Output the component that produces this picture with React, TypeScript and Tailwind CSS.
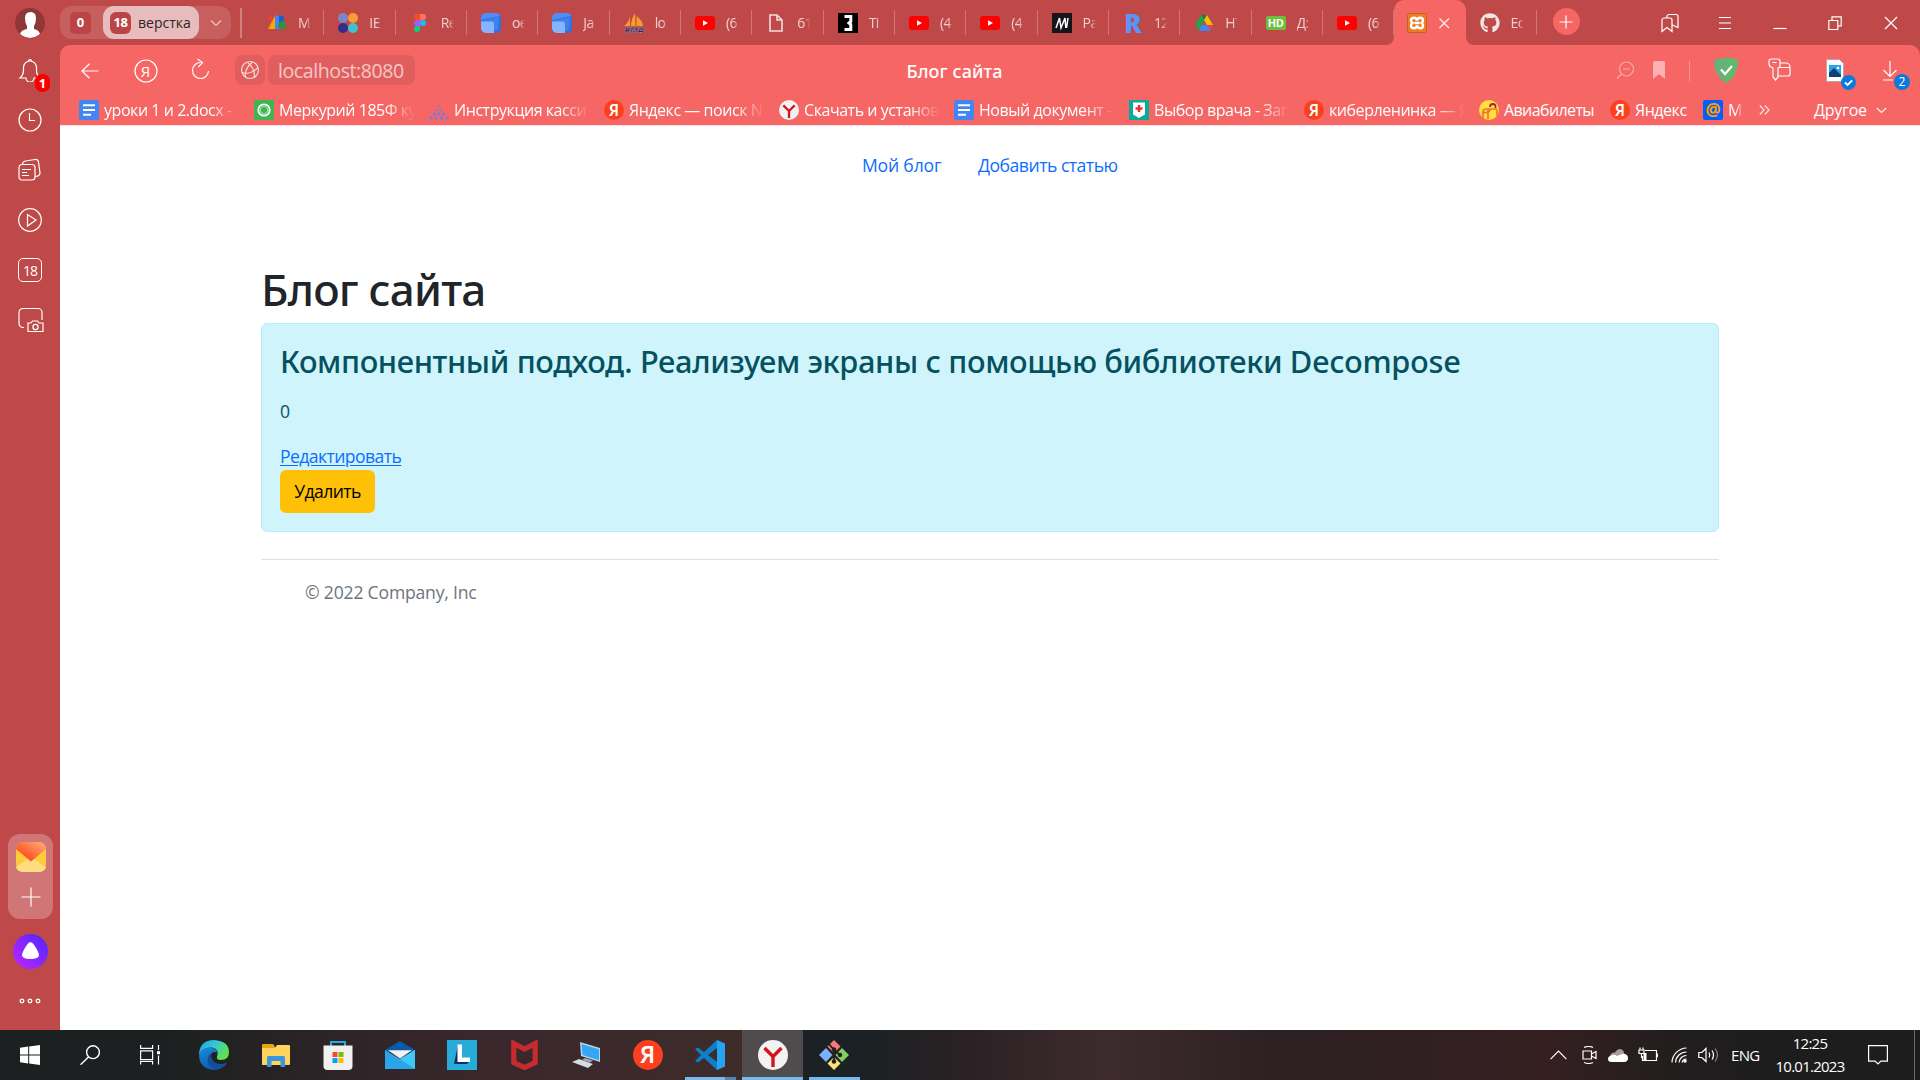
import type { ReactNode } from "react";
import { FaGithub } from "react-icons/fa";

const stroke = { fill: "none", stroke: "currentColor", strokeWidth: 1.2 } as const;

function YouTubeIcon() {
  return (
    <svg className="size-5" viewBox="0 0 20 20">
      <rect y="3" width="20" height="14" rx="3" fill="#ff0000" />
      <path d="M8 7.2v5.6l5-2.8z" fill="#fff" />
    </svg>
  );
}

function BlueDocIcon() {
  return (
    <svg className="size-5" viewBox="0 0 20 20">
      <rect width="20" height="20" rx="5" fill="#2f6fe4" />
      <path d="M0 7V5a5 5 0 0 1 5-5h10a5 5 0 0 1 4.500 3z" fill="#4f8df0" />
      <path d="M0 8l17-3.500q1.500 0 1.300 1.500L17 17l-4 1z" fill="#3f82ee" />
      <path d="M0 8.500h10.500q2.500 0 2.500 2.500v9H5a5 5 0 0 1-5-5z" fill="#86b4ff" />
    </svg>
  );
}

function YaIcon({ className }: { className: string }) {
  return (
    <svg className={className} viewBox="0 0 20 20">
      <circle cx="10" cy="10" r="10" fill="#fc3f1d" />
      <text x="9.600" y="15.600" textAnchor="middle" fill="#fff" fontSize="15.500" fontWeight="600" fontFamily="Noto Sans, sans-serif">
        Я
      </text>
    </svg>
  );
}

function YBrowserIcon({ className }: { className: string }) {
  return (
    <svg className={className} viewBox="0 0 30 30">
      <circle cx="15" cy="15" r="15" fill="#f2f2f2" />
      <path d="M6.500 8l8.500 8.500L23.500 8M15 16v11" fill="none" stroke="#d3151b" strokeWidth="3.400" />
    </svg>
  );
}

function DocsIcon() {
  return (
    <svg className="size-5 shrink-0" viewBox="0 0 20 20">
      <rect width="20" height="20" rx="2" fill="#4285f4" />
      <path d="M4 5.200h12M4 10h12M4 14.800h8" stroke="#fff" strokeWidth="2" />
    </svg>
  );
}

const adsIcon = (
  <svg className="size-5" viewBox="0 0 20 20">
    <path d="M8 3L1 16h8z" fill="#f9ab00" />
    <path d="M8 3L3 16H1z" fill="#f29900" />
    <rect x="8" y="2.500" width="6" height="13.500" fill="#4285f4" />
    <path d="M12 2.500h1.500a3.500 3.500 0 0 1 0 7H12z" fill="#1a5fd0" />
    <circle cx="15" cy="12.200" r="4" fill="#2b9348" />
    <circle cx="3.500" cy="5" r="2.500" fill="#ea4335" />
  </svg>
);

const dotsIcon = (
  <svg className="size-5" viewBox="0 0 20 20">
    <circle cx="5" cy="5" r="5" fill="#7c86c6" />
    <circle cx="15" cy="5" r="5" fill="#f99d33" />
    <circle cx="5" cy="15" r="5" fill="#322c8e" />
    <circle cx="15" cy="15" r="5" fill="#3fc1d0" />
  </svg>
);

const figmaIcon = (
  <svg className="size-5" viewBox="0 0 20 20">
    <path d="M10 1H7a3 3 0 0 0 0 6h3z" fill="#f24e1e" />
    <path d="M10 1h3a3 3 0 0 1 0 6h-3z" fill="#ff7262" />
    <path d="M10 7H7a3 3 0 0 0 0 6h3z" fill="#a259ff" />
    <circle cx="13" cy="10" r="3" fill="#1abcfe" />
    <path d="M10 13H7a3 3 0 1 0 3 3z" fill="#0acf83" />
  </svg>
);

const pmaIcon = (
  <svg className="size-5" viewBox="0 0 20 20">
    <path d="M6 3v10H0q5-3.500 6-10zM11 0Q7 6.500 7 13h4.500zM12.500 3q6 4.500 6.500 10h-6.500z" fill="#f89c2b" />
    <text x="10" y="19.800" textAnchor="middle" fill="#26285c" stroke="#c9b4c4" strokeWidth="0.300" fontSize="8.500" fontWeight="800" fontStyle="italic" fontFamily="Open Sans, sans-serif">
      PMA
    </text>
  </svg>
);

const fileIcon = (
  <svg className="size-5 text-[#f3dede]" viewBox="0 0 20 20">
    <path d="M4 2h7l5 5v11H4zM11 2v5h5" fill="none" stroke="currentColor" strokeWidth="1.600" />
  </svg>
);

const threeIcon = (
  <svg className="size-5" viewBox="0 0 20 20">
    <rect width="20" height="20" fill="#000" />
    <path d="M6.500 3.500h6.300v5L11 10l1.800 1.500v5H6.500" fill="none" stroke="#fff" strokeWidth="3" />
  </svg>
);

const mIcon = (
  <svg className="size-5" viewBox="0 0 20 20">
    <rect width="20" height="20" fill="#14141a" />
    <path d="M4 15L7.500 5l1.500 10L13 5l.8 10M14.500 15L16 5" fill="none" stroke="#fff" strokeWidth="1.500" />
  </svg>
);

const rIcon = (
  <div className="flex size-5 items-center justify-center font-['Open_Sans'] text-[26px] leading-5 font-extrabold text-[#5b94f5]">R</div>
);

const driveIcon = (
  <svg className="size-5" viewBox="0 0 20 20">
    <path d="M7 2l3.500 5L5 17l-4-5z" fill="#26a04b" />
    <path d="M7 2h6l6 10h-6z" fill="#fbbc04" />
    <path d="M7 2h6l-3 5z" fill="#188038" />
    <path d="M7.500 12H19l-3.500 6H5z" fill="#4285f4" />
    <path d="M13 12h6l-3 5z" fill="#ea4335" />
  </svg>
);

const hdIcon = (
  <div className="flex h-[14px] w-5 items-center justify-center rounded-[2px] bg-[#6cbf3b] font-['Open_Sans'] text-[11px] leading-none font-bold tracking-[-0.5px] text-white">HD</div>
);

const xamppIcon = (
  <svg className="size-5" viewBox="0 0 20 20">
    <rect x="0.500" y="0.500" width="19" height="19" rx="2" fill="#f07c22" stroke="#b9642a" />
    <path
      d="M10 7.500Q9.500 4.800 7 4.800 4 4.800 4 7.500 4 9 5.500 10 4 11 4 12.500 4 15.200 7 15.200q2.500 0 3-2.700.5 2.700 3 2.700 3 0 3-2.700 0-1.500-1.500-2.500Q16 9 16 7.500 16 4.800 13 4.800q-2.500 0-3 2.700zM7.500 10h5"
      fill="none"
      stroke="#fff"
      strokeWidth="2.400"
    />
  </svg>
);

const tabs: { icon: ReactNode; label: string }[] = [
  { icon: adsIcon, label: "М" },
  { icon: dotsIcon, label: "IE" },
  { icon: figmaIcon, label: "Re" },
  { icon: <BlueDocIcon />, label: "ое" },
  { icon: <BlueDocIcon />, label: "Ja" },
  { icon: pmaIcon, label: "lo" },
  { icon: <YouTubeIcon />, label: "(6" },
  { icon: fileIcon, label: "61" },
  { icon: threeIcon, label: "Ti" },
  { icon: <YouTubeIcon />, label: "(4" },
  { icon: <YouTubeIcon />, label: "(4" },
  { icon: mIcon, label: "Ра" },
  { icon: rIcon, label: "12" },
  { icon: driveIcon, label: "НТ" },
  { icon: hdIcon, label: "Д:" },
  { icon: <YouTubeIcon />, label: "(6" },
];

function Tab({ icon, label }: { icon: ReactNode; label: string }) {
  return (
    <div className="flex h-[45px] w-[71.33px] shrink-0 items-center pl-[14px]">
      <div className="flex size-5 shrink-0 items-center justify-center">{icon}</div>
      <div className="ml-[11px] w-[13px] shrink-0 overflow-hidden mask-r-from-60% mask-r-to-100% text-[14px] leading-5 tracking-[-0.6px] whitespace-nowrap text-white/75">{label}</div>
      <div className="ml-auto h-[25px] w-px bg-white/25" />
    </div>
  );
}

function TabStrip() {
  return (
    <div className="flex h-[45px] items-center">
      <div className="flex h-[33px] w-[171px] items-center rounded-xl bg-white/12 pl-[10px]">
        <div className="flex h-[22px] w-[21px] items-center justify-center rounded-[5px] bg-[#bd4446] text-[13px] font-bold text-white">0</div>
        <div className="ml-3 flex h-[33px] w-24 items-center rounded-[11px] bg-[#e7bcbd] pl-[7px]">
          <div className="flex h-[22px] w-[21px] items-center justify-center rounded-[6px] bg-[#bd4446] text-[13px] font-bold tracking-[-0.5px] text-white">18</div>
          <span className="ml-[7px] text-[14px] text-[#2d2424]">верстка</span>
        </div>
        <svg className="ml-[11px] h-3 w-3 text-white/65" viewBox="0 0 12 12">
          <path d="M1 3.500l5 5 5-5" {...stroke} />
        </svg>
      </div>
      <div className="ml-[9px] h-[30px] w-[2px] bg-white/30" />
      <div className="ml-[11px] flex">
        {tabs.map((t, i) => (
          <Tab key={i} icon={t.icon} label={t.label} />
        ))}
        <div className="relative flex h-[45px] w-[71.33px] items-center rounded-t-[10px] bg-[#f56665] pl-[13px]">
          <svg className="absolute bottom-0 -left-2 size-2 text-[#f56665]" viewBox="0 0 8 8">
            <path d="M8 0v8H0a8 8 0 0 0 8-8z" fill="currentColor" />
          </svg>
          <svg className="absolute -right-2 bottom-0 size-2 text-[#f56665]" viewBox="0 0 8 8">
            <path d="M0 0v8h8a8 8 0 0 1-8-8z" fill="currentColor" />
          </svg>
          {xamppIcon}
          <svg className="ml-[10px] size-[14px] text-white/90" viewBox="0 0 14 14">
            <path d="M2.500 2.500l9.500 9.500M12 2.500L2.500 12" {...stroke} />
          </svg>
        </div>
        <Tab icon={<FaGithub className="size-5 text-[#f1e4e4]" />} label="Ес" />
      </div>
      <div className="mb-[2px] ml-4 flex size-[27px] items-center justify-center rounded-full bg-[#f56665] text-white">
        <svg className="size-[14px]" viewBox="0 0 14 14">
          <path d="M7 .5v13M.5 7h13" {...stroke} />
        </svg>
      </div>
      <div className="ml-auto flex items-center text-white">
        <div className="flex w-[55px] justify-center">
          <svg className="size-5" viewBox="0 0 20 20">
            <path d="M2 7a2 2 0 0 1 2-2h6a2 2 0 0 1 2 2v11.500l-5-4-5 4zM7 5V3.500a2 2 0 0 1 2-2h7a2 2 0 0 1 2 2V14.500L12.500 12" {...stroke} />
          </svg>
        </div>
        <div className="flex w-[55px] justify-center">
          <svg className="size-[14px]" viewBox="0 0 14 14">
            <path d="M1 1.500h12M1 7h12M1 12.500h12" {...stroke} />
          </svg>
        </div>
        <div className="flex w-[55px] justify-center">
          <svg className="size-[14px]" viewBox="0 0 14 14">
            <path d="M.5 12.500h13" {...stroke} />
          </svg>
        </div>
        <div className="flex w-[55px] justify-center">
          <svg className="size-[14px]" viewBox="0 0 14 14">
            <path d="M.8 4.500h9v9h-9zM4 4.500V.8h9.200v9H9.800" {...stroke} />
          </svg>
        </div>
        <div className="flex w-[58px] justify-center">
          <svg className="size-[14px]" viewBox="0 0 14 14">
            <path d="M1 1l12 12M13 1L1 13" {...stroke} />
          </svg>
        </div>
      </div>
    </div>
  );
}

function AddressRow() {
  return (
    <div className="flex h-[52px] items-center text-white">
      <div className="flex w-[59px] justify-center">
        <svg className="-mt-px h-4 w-[18px]" viewBox="0 0 18 16">
          <path d="M17.500 8H1M8.500.8L1 8l7.500 7.200" {...stroke} />
        </svg>
      </div>
      <div className="flex w-[53px] justify-center">
        <svg className="-mt-px size-6" viewBox="0 0 24 24">
          <circle cx="12" cy="12" r="11" {...stroke} />
          <text x="11.500" y="17.500" textAnchor="middle" fill="currentColor" fontSize="15" fontFamily="Open Sans, sans-serif">
            Я
          </text>
        </svg>
      </div>
      <div className="flex w-14 justify-center">
        <svg className="-mt-1 size-[22px]" viewBox="0 0 22 22">
          <path d="M11.500 4.500a8 8 0 1 0 8 8.500M8.500 1l5 3.600-4.200 4.400" {...stroke} />
        </svg>
      </div>
      <div className="ml-[7px] -mt-[2px] flex size-[30px] items-center justify-center rounded-lg bg-[#e05e5d] text-white/75">
        <svg className="size-5" viewBox="0 0 20 20">
          <g {...stroke}>
            <circle cx="10" cy="10" r="8.500" />
            <path d="M12.500 2Q4 9 5.500 17M7.500 2.500Q15 8 14.500 17.500M2 12.500q8 3 16-5" />
          </g>
        </svg>
      </div>
      <div className="ml-[3px] -mt-[2px] flex h-[30px] w-[147px] items-center rounded-lg bg-[#e05e5d] pt-px pl-[10px] text-[19.5px] tracking-[-0.4px] text-white/65">localhost:8080</div>
      <div className="flex flex-1 justify-center pr-[115px] font-['Noto_Sans'] text-[18px] font-medium tracking-[0.1px]">Блог сайта</div>
      <div className="flex w-8 justify-center text-white/45">
        <svg className="-mt-[2px] size-[18px]" viewBox="0 0 18 18">
          <path d="M10.500 1a7 7 0 1 1 0 14 7 7 0 0 1 0-14zM5.500 13L1 17.500M7 8h7" {...stroke} />
        </svg>
      </div>
      <div className="flex w-9 justify-center text-white/50">
        <svg className="-mt-[2px] h-[18px] w-3" viewBox="0 0 12 18">
          <path d="M0 1.500Q0 0 1.500 0h9Q12 0 12 1.500V18l-6-5-6 5z" fill="currentColor" />
        </svg>
      </div>
      <div className="flex w-[25px] justify-center">
        <div className="h-5 w-px bg-white/30" />
      </div>
      <div className="flex w-12 justify-center">
        <svg className="-mt-[2px] h-[25px] w-6" viewBox="0 0 24 25">
          <path d="M0 2q7-2.500 12-2v25Q0 18 0 2z" fill="#67b279" />
          <path d="M24 2q-7-2.500-12-2v25Q24 18 24 2z" fill="#5fba6b" />
          <path d="M7 11.500l4 4.500 7-8" fill="none" stroke="#fff" strokeWidth="2.200" />
        </svg>
      </div>
      <div className="flex w-[60px] justify-center">
        <svg className="-mt-[2px] size-6" viewBox="0 0 24 24">
          <path d="M3 1h7a2 2 0 0 1 2 2v5a3 3 0 0 1-2 2v9l-2.500 3L5 19v-9L2 8.500Q1 7 1 5.500V3a2 2 0 0 1 2-2zM4.500 4.500h4M12 5h6a4 4 0 0 1 4 4v7a2 2 0 0 1-2 2h-9.500M12 9.500h10" {...stroke} />
        </svg>
      </div>
      <div className="flex w-[50px] justify-center">
        <div className="relative -mt-[2px] h-[23px] w-[18px]">
          <svg className="h-[23px] w-[18px]" viewBox="0 0 18 23">
            <path d="M.5.500h13l4 4v18H.5z" fill="#fff" stroke="#b9a5a5" />
            <rect x="3" y="6" width="12" height="12" fill="#29a3e8" />
            <path d="M3 18v-4l5-5 7 7v2z" fill="#123f73" />
            <circle cx="12" cy="9" r="1.300" fill="#fff" />
          </svg>
          <svg className="absolute -right-3 -bottom-2 size-[15px]" viewBox="0 0 15 15">
            <circle cx="7.500" cy="7.500" r="7.500" fill="#0b7bdb" />
            <path d="M4 7.500l2.500 2.500 4.700-4.700" fill="none" stroke="#fff" strokeWidth="1.800" />
          </svg>
        </div>
      </div>
      <div className="flex w-[60px] justify-center">
        <div className="relative size-5">
          <svg className="size-5" viewBox="0 0 20 20">
            <path d="M10 0v15M3.500 9l6.500 6.500L16.500 9M3 19h10" {...stroke} />
          </svg>
          <div className="absolute -right-[10px] -bottom-[9px] flex size-4 items-center justify-center rounded-full bg-[#0b7bdb] text-[12px] leading-none text-white">2</div>
        </div>
      </div>
    </div>
  );
}

const greenIcon = (
  <svg className="size-5 shrink-0" viewBox="0 0 20 20">
    <rect width="20" height="20" fill="#3fb44f" />
    <circle cx="10" cy="10" r="5.700" fill="none" stroke="#fff" strokeWidth="1.800" />
    <circle cx="10" cy="10" r="3.600" fill="none" stroke="#9bd8a3" strokeWidth="1.200" />
  </svg>
);

const pyramidIcon = (
  <svg className="size-5 shrink-0" viewBox="0 0 20 20" fill="#6d7ce8">
    <circle cx="10" cy="6" r="1.200" opacity="0.500" />
    <circle cx="8" cy="10" r="1.400" opacity="0.700" />
    <circle cx="12" cy="10" r="1.400" opacity="0.700" />
    <circle cx="5.500" cy="14" r="1.500" />
    <circle cx="10" cy="14" r="1.500" />
    <circle cx="14.500" cy="14" r="1.500" />
    <circle cx="2" cy="18" r="1.600" />
    <circle cx="7" cy="18" r="1.600" />
    <circle cx="12.500" cy="18" r="1.600" />
    <circle cx="18" cy="18" r="1.600" />
  </svg>
);

const doctorIcon = (
  <svg className="size-5 shrink-0" viewBox="0 0 20 20">
    <rect width="20" height="20" fill="#0bab9b" />
    <path d="M4 2.500h12v12L10 18l-6-3.500z" fill="#fff" />
    <path d="M10 5v7M6.500 8.500h7" stroke="#ee2c39" strokeWidth="2.400" />
  </svg>
);

const aviaIcon = (
  <svg className="size-5 shrink-0" viewBox="0 0 20 20">
    <circle cx="10" cy="10" r="10" fill="#ffdf3f" />
    <path d="M4 19V12q0-3 3-3h9q2 0 2 2v5M9 9v10M3 12q6 2 8-2" fill="none" stroke="#f0782a" strokeWidth="1.700" />
    <path d="M11 7q0-3 3-3t2.500 4" fill="none" stroke="#b01c3c" strokeWidth="1.800" />
  </svg>
);

const mailRuIcon = (
  <div className="flex size-5 shrink-0 items-center justify-center rounded-[2px] bg-[#005ff9] text-[17px] leading-[18px] font-bold text-[#ff9e00]">@</div>
);

const bookmarks: { icon: ReactNode; label: string }[] = [
  { icon: <DocsIcon />, label: "уроки 1 и 2.docx -" },
  { icon: greenIcon, label: "Меркурий 185Ф ку" },
  { icon: pyramidIcon, label: "Инструкция касси" },
  { icon: <YaIcon className="size-5 shrink-0" />, label: "Яндекс — поиск N" },
  { icon: <YBrowserIcon className="size-5 shrink-0" />, label: "Скачать и установ" },
  { icon: <DocsIcon />, label: "Новый документ -" },
  { icon: doctorIcon, label: "Выбор врача - Заг" },
  { icon: <YaIcon className="size-5 shrink-0" />, label: "киберленинка — Я" },
];

function BookmarksRow() {
  return (
    <div className="flex h-[28px] items-center pb-[2px] pl-[19px] text-[16px] tracking-[-0.45px] whitespace-nowrap text-white">
      {bookmarks.map((b, i) => (
        <div key={i} className="flex w-[175px] shrink-0 items-center">
          {b.icon}
          <span className="ml-[5px] w-[136px] overflow-hidden mask-r-from-78% mask-r-to-100% leading-6">{b.label}</span>
        </div>
      ))}
      <div className="flex w-[131px] items-center gap-[5px] tracking-[-0.6px]">
        {aviaIcon}
        <span>Авиабилеты</span>
      </div>
      <div className="flex w-[93px] items-center gap-[5px]">
        <YaIcon className="size-5 shrink-0" />
        <span>Яндекс</span>
      </div>
      <div className="flex w-[56px] items-center gap-[5px]">
        {mailRuIcon}
        <span className="w-[15px] overflow-hidden mask-r-from-50% mask-r-to-100%">М</span>
      </div>
      <svg className="h-3 w-[11px] text-white/80" viewBox="0 0 11 12">
        <path d="M.8 1.500L5 6 .8 10.500M5.800 1.500L10 6l-4.200 4.500" {...stroke} />
      </svg>
      <span className="ml-[44px] tracking-[-0.25px]">Другое</span>
      <svg className="ml-[9px] h-3 w-[11px] text-white/90" viewBox="0 0 11 12">
        <path d="M.8 4l4.700 4.500L10.200 4" {...stroke} />
      </svg>
    </div>
  );
}

function Sidebar() {
  return (
    <aside className="flex h-full w-[60px] shrink-0 flex-col items-center text-white">
      <div className="mt-2 flex size-[30px] shrink-0 items-center justify-center overflow-hidden rounded-full bg-[#8f3636]">
        <svg className="size-[30px]" viewBox="0 0 30 30" fill="#fff">
          <path d="M10 10q0-6 5.500-6T21 10q0 5-2 8v3q5 1 6 5-10 8-20 0 1-4 7-5v-3q-2-3-2-8z" />
        </svg>
      </div>
      <div className="relative mt-[7px] flex size-[50px] items-center justify-center">
        <svg className="size-6" viewBox="0 0 24 24">
          <path d="M2 20q3.500-3 3.500-8V9.500a6.500 6.500 0 0 1 13 0V12q0 5 3.500 8h-6a4 4 0 0 1-8 0zM10.500 3a1.500 1.500 0 0 1 3 0" {...stroke} />
        </svg>
        <div className="absolute top-[29px] left-[30px] flex h-[18px] w-[15px] items-center justify-center rounded-[7px] bg-[#f90000] text-[13px] leading-none font-bold">1</div>
      </div>
      <div className="flex size-[50px] items-center justify-center">
        <svg className="size-6" viewBox="0 0 24 24">
          <path d="M12 1a11 11 0 1 1 0 22 11 11 0 0 1 0-22zM11.500 5v7.500H17" {...stroke} />
        </svg>
      </div>
      <div className="flex size-[50px] items-center justify-center">
        <svg className="size-6" viewBox="0 0 24 24">
          <path d="M4 6.500h10a3 3 0 0 1 3 3V19a3 3 0 0 1-3 3H4a3 3 0 0 1-3-3V9.500a3 3 0 0 1 3-3zM4 11.500h9M4 14.500h5M4 17.500h7M4.500 6q.2-2.500 3-3L17 1.500q3-.3 3.500 2.500L22 15q0 3-4.500 3.500" {...stroke} />
        </svg>
      </div>
      <div className="flex size-[50px] items-center justify-center">
        <svg className="size-6" viewBox="0 0 24 24">
          <path d="M12 .7a11.300 11.300 0 1 1 0 22.600A11.300 11.300 0 0 1 12 .7zM9.500 6.500v11.500L18 12z" {...stroke} />
        </svg>
      </div>
      <div className="flex size-[50px] items-center justify-center">
        <div className="flex size-6 items-center justify-center rounded-[5px] border border-white text-[14px] tracking-[-1px]">18</div>
      </div>
      <div className="flex size-[50px] items-center justify-center">
        <svg className="ml-[2px] h-6 w-[26px]" viewBox="0 0 26 24">
          <path d="M6 19.500H5a4 4 0 0 1-4-4V4.500a4 4 0 0 1 4-4h15a4 4 0 0 1 4 4V12M10 15h3l1.500-2h5l1.500 2h4v8.500H10z" {...stroke} />
          <circle cx="17.500" cy="19" r="2.600" {...stroke} />
        </svg>
      </div>
      <div className="mt-auto ml-[1px] flex h-[85px] w-[45px] flex-col items-center rounded-xl bg-[#d07676] pt-2">
        <svg className="size-[30px]" viewBox="0 0 30 30">
          <defs>
            <linearGradient id="flap" x1="0" y1="1" x2="1" y2="0">
              <stop offset="0.200" stopColor="#fc4a1a" />
              <stop offset="1" stopColor="#ffb07c" />
            </linearGradient>
          </defs>
          <rect width="30" height="30" rx="8" fill="#ffcb3d" />
          <path d="M0 25l15-10 15 10q-1 5-8 5H8q-7 0-8-5z" fill="#ffdc80" />
          <path d="M0 7q1-7 8-7h14q7 0 8 7L15 19.500z" fill="url(#flap)" />
        </svg>
        <svg className="mt-[15px] size-5" viewBox="0 0 20 20">
          <path d="M10 .5v19M.5 10h19" {...stroke} />
        </svg>
      </div>
      <svg className="mt-[15px] ml-[1px] size-[35px] shrink-0" viewBox="0 0 35 35">
        <defs>
          <linearGradient id="alice" x1="0" y1="1" x2="1" y2="0">
            <stop offset="0" stopColor="#c226ff" />
            <stop offset="1" stopColor="#4a26ff" />
          </linearGradient>
        </defs>
        <circle cx="17.500" cy="17.500" r="17.500" fill="url(#alice)" />
        <path d="M17.500 8q2 0 4 3.500 4.500 7 4.500 9.500 0 4-8.500 4T9 21q0-2.500 4.500-9.500Q15.500 8 17.500 8z" fill="#fff" />
      </svg>
      <svg className="mt-[29px] mb-[26px] h-[6px] w-[22px] shrink-0" viewBox="0 0 22 6">
        <g fill="none" stroke="currentColor" strokeWidth="1.300">
          <circle cx="3" cy="3" r="1.800" />
          <circle cx="11" cy="3" r="1.800" />
          <circle cx="19" cy="3" r="1.800" />
        </g>
      </svg>
    </aside>
  );
}

function BlogPage() {
  return (
    <main className="flex-1 border-t border-[#f5dede] bg-white px-[201px] text-[17.6px] leading-[26px]">
      <nav className="flex gap-[36px] pt-[26px] pl-[601px] text-[#0d6efd]">
        <a className="w-[80px] tracking-[-0.2px] whitespace-nowrap">Мой блог</a>
        <a className="tracking-[-0.5px]">Добавить статью</a>
      </nav>
      <h1 className="mt-[85px] font-['Noto_Sans'] text-[44px] leading-[53px] font-medium tracking-[-0.8px] text-[#212529]">Блог сайта</h1>
      <section className="mt-[7px] h-[209px] rounded-[6px] border border-[#b6effb] bg-[#cff4fc] px-[18px] pt-[19px] text-[#055160]">
        <h3 className="font-['Noto_Sans'] text-[30.8px] leading-[37px] font-medium tracking-[-0.36px] whitespace-nowrap">
          Компонентный подход. Реализуем экраны с помощью библиотеки Decompose
        </h3>
        <p className="mt-[18px] tracking-[-0.5px]">0</p>
        <a className="mt-[19px] block tracking-[-0.58px] text-[#0d6efd] underline underline-offset-2">Редактировать</a>
        <button className="mt-[1px] flex h-[43px] w-[95px] items-center justify-center rounded-[6px] bg-[#ffc107] pb-px tracking-[-0.6px] text-black">Удалить</button>
      </section>
      <footer className="mt-[27px] border-t border-[#dee2e6] pt-[19px] pl-[44px] tracking-[-0.2px] text-[#6c757d]">© 2022 Company, Inc</footer>
    </main>
  );
}

const apps: ReactNode[] = [
  <svg className="size-[30px]" viewBox="0 0 30 30" key="edge">
    <defs>
      <linearGradient id="edgeTop" x1="0" y1="0" x2="1" y2="0.500">
        <stop offset="0" stopColor="#1b9de2" />
        <stop offset="0.500" stopColor="#36c7d6" />
        <stop offset="1" stopColor="#62e04c" />
      </linearGradient>
      <linearGradient id="edgeBottom" x1="0" y1="0" x2="0.500" y2="1">
        <stop offset="0" stopColor="#1a8ce0" />
        <stop offset="1" stopColor="#0c59a4" />
      </linearGradient>
    </defs>
    <path d="M0 14Q1 0 15 0q15 1 15 12 0 8-8 8-5 0-4-3 3-8-5-9.500Q5 7 0 14z" fill="url(#edgeTop)" />
    <path d="M0 14q3-7 11-6.500 7 1 7 5-6-2-6 4 1 8 9 8 4 0 7-2-4 7.500-13 7.500Q0 29 0 14z" fill="url(#edgeBottom)" />
    <path d="M12 13q-4 3-3 9 2 6 8 7.500 7-1 11-7-7 3-12 0-5-4-4-9.500z" fill="#124e9c" />
  </svg>,
  <svg className="h-6 w-7" viewBox="0 0 28 24" key="explorer">
    <path d="M0 2Q0 1 1 1h10l3 4H0z" fill="#e8a50c" />
    <path d="M0 5h13l2-3h12q1 0 1 1v18q0 1-1 1H0z" fill="#ffd35c" />
    <path d="M5 24V14.500q0-1.500 1.500-1.500h15q1.500 0 1.500 1.500V24h-4.500v-6h-9v6z" fill="#3d95dd" />
  </svg>,
  <svg className="size-[30px]" viewBox="0 0 30 30" key="store">
    <path d="M8 7V2h14v5" fill="none" stroke="#27a9e8" strokeWidth="2" />
    <path d="M.5 5.500h29V26q0 4-4 4h-21q-4 0-4-4z" fill="#f0f0f0" />
    <path d="M9.500 12h5v5h-5z" fill="#f25022" />
    <path d="M15.500 12h5v5h-5z" fill="#7fba00" />
    <path d="M9.500 18h5v5h-5z" fill="#00a4ef" />
    <path d="M15.500 18h5v5h-5z" fill="#ffb900" />
  </svg>,
  <svg className="size-[30px]" viewBox="0 0 30 30" key="mail">
    <path d="M0 10l15-9 15 9v2H0z" fill="#0a5aa8" />
    <path d="M0 10v19h30V10l-15 9z" fill="#2aa5ea" />
    <path d="M30 10v19L15 19z" fill="#3fc9f7" />
    <path d="M3 10.300h24L15 18.500z" fill="#f2f2f2" />
  </svg>,
  <svg className="size-[30px]" viewBox="0 0 30 30" key="l">
    <rect width="30" height="30" fill="#27abd8" />
    <path d="M11 5L7 24l4-2z" fill="#0f3068" />
    <path d="M7 24l4-3h12l-3 3z" fill="#0f3068" />
    <path d="M10.500 4.500h4.500v13h8v4.500H10.500z" fill="#fff" />
  </svg>,
  <svg className="h-[30px] w-[27px]" viewBox="0 0 27 30" key="mcafee">
    <path d="M2.800 3.500l10.700 5.500 10.700-5.500v19L13.500 27.500l-10.700-5z" fill="none" stroke="#c42c2f" strokeWidth="5.200" />
  </svg>,
  <svg className="h-[26px] w-7" viewBox="0 0 28 26" key="pc">
    <path d="M8 0l20 6v14L9 14z" fill="#b9d6e8" />
    <path d="M9.500 2L27 7.200v11L10.500 13z" fill="#35a6f3" />
    <path d="M0 20l7-3 14 5-5 4z" fill="#d5dce2" />
    <path d="M13 16l8 2.500-3 2-8-2.500z" fill="#9eabb5" />
  </svg>,
  <YaIcon className="size-[30px]" key="ya" />,
  <svg className="size-[30px]" viewBox="0 0 30 30" key="vscode">
    <path d="M22 0L9 12 3 7.500 0 9l6 6-6 6 3 1.500L9 18l13 12V22l-9-7 9-7z" fill="#0f7fcb" />
    <path d="M22 0l8 3.500v23L22 30z" fill="#26a3f1" />
  </svg>,
  <YBrowserIcon className="size-[30px]" key="yb" />,
  <svg className="size-[30px]" viewBox="0 0 30 30" key="git">
    <path d="M15 0l6.500 6.500L15 13 8.500 6.500z" fill="#f37b7b" />
    <path d="M7 8l6.500 7L7 22 0 15z" fill="#7db0fa" />
    <path d="M23 8l7 7-7 7-6.500-7z" fill="#82d05e" />
    <path d="M15 17l6.500 6.500L15 30l-6.500-6.500z" fill="#fbe277" />
    <path d="M10 4l5 6v12M15 10l6 5" fill="none" stroke="#231f20" strokeWidth="1.800" />
    <g fill="#231f20">
      <circle cx="15" cy="9.500" r="2.200" />
      <circle cx="21" cy="15" r="2.200" />
      <circle cx="15" cy="21.500" r="2.300" />
    </g>
  </svg>,
];

function Taskbar() {
  return (
    <footer className="flex h-[50px] shrink-0 items-center bg-[#1d1d1d] text-white">
      <div className="flex h-full w-[803px] items-center bg-linear-to-r from-[#1c2020] from-20% via-[#3a272c] via-60% to-[#3f2d2a]">
        <div className="flex w-[60px] justify-center">
          <svg className="size-5" viewBox="0 0 20 20" fill="#fff">
            <path d="M0 2.800L8.200 1.600V9.500H0zM9.200 1.500L20 0v9.500H9.200zM0 10.500h8.200v7.900L0 17.200zM9.200 10.500H20V20L9.200 18.500z" />
          </svg>
        </div>
        <div className="flex w-[60px] justify-center">
          <svg className="size-5" viewBox="0 0 20 20">
            <path d="M13 .8a6.400 6.400 0 1 1 0 12.800A6.400 6.400 0 0 1 13 .8zM8.500 12L.5 19.700" fill="none" stroke="#fff" strokeWidth="1.400" />
          </svg>
        </div>
        <div className="flex w-[60px] justify-center">
          <svg className="h-5 w-5" viewBox="0 0 20 20">
            <path d="M.6 0v3.400h12V0M.6 5.800h12v8.800H.6zM.6 19.600v-3.100h12v3.100M18.500 0v5M18.500 10.500v9" fill="none" stroke="#fff" strokeWidth="1.200" />
            <rect x="17" y="6.200" width="3" height="3" fill="#fff" />
          </svg>
        </div>
        <div className="ml-[3px] flex h-full">
          {apps.slice(0, 8).map((icon, i) => (
            <div key={i} className="flex h-full w-[62px] items-center justify-center">{icon}</div>
          ))}
          <div className="relative flex h-full w-[62px] items-center justify-center">
            {apps[8]}
            <div className="absolute bottom-0 left-[6px] flex h-[3px] w-[51px] bg-[#76b9ed]">
              <div className="ml-auto w-[11px] bg-[#5586ad]" />
            </div>
          </div>
          <div className="ml-px flex h-full w-[61px] items-center justify-center border-b-[3px] border-[#76b9ed] bg-[#504b4c] pt-[3px]">{apps[9]}</div>
        </div>
      </div>
      <div className="relative flex h-full w-[62px] items-center justify-center bg-[#1b2124]">
        {apps[10]}
        <div className="absolute bottom-0 left-[6px] h-[3px] w-[51px] bg-[#76b9ed]" />
      </div>
      <div className="flex h-full flex-1 items-center">
        <div className="h-full w-[240px] bg-linear-to-r from-[#1b2124] via-[#2a2124] via-40% to-[#3d2b2d]" />
        <div className="h-full flex-1 bg-linear-to-r from-[#3d2b2d] via-[#2c2022] via-40% to-[#351f21]" />
        <div className="flex h-full w-[376px] items-center bg-linear-to-r from-[#351f21] via-[#1f1d1d] via-40% to-[#1d1d1d]">
          <svg className="ml-[6px] h-[10px] w-[17px]" viewBox="0 0 17 10">
            <path d="M.6 9.200l7.900-8 7.900 8" {...stroke} />
          </svg>
          <svg className="ml-[15px] h-[18px] w-[15px]" viewBox="0 0 15 18">
            <path d="M1 5h8.500v8H1zM9.500 8L14 5.500v7L9.500 10M2 1.500q5-2 9 0M2 16.500q5 2 9 0" {...stroke} />
          </svg>
          <svg className="ml-[11px] h-[13px] w-5" viewBox="0 0 20 13">
            <path d="M2 7q1-4 5-3.500Q9 0 12 0q4 .5 4 4.500l-8 4z" fill="#a79d9d" />
            <path d="M3.500 13Q0 13 0 10t3.500-3.500Q6 5 9 7l6-2.500q5 .5 5 4.500t-4 4z" fill="#fff" />
          </svg>
          <svg className="ml-[10px] h-4 w-5" viewBox="0 0 20 16">
            <path d="M7 3.500h11.500v10H4.500V9M1 3h5v3.500H1zM2 3V.5M5 3V.5M3.500 6.500V11M18.500 7h1.200v3" {...stroke} />
            <path d="M5.500 6h3v7h-3z" fill="#fff" />
          </svg>
          <svg className="ml-[13px] size-4" viewBox="0 0 16 16">
            <path d="M1 15.500A15 15 0 0 1 15.500 1M4.500 15.500A11 11 0 0 1 15.500 5M8 15.500A7.500 7.500 0 0 1 15.500 8.500M11 15.500a4.500 4.500 0 0 1 4.500-3.500" {...stroke} />
            <circle cx="14" cy="14" r="1.700" fill="#fff" />
          </svg>
          <svg className="ml-[11px] h-[18px] w-[21px]" viewBox="0 0 21 18">
            <path d="M.8 6.500h3L8 2.500v13l-4.200-4h-3zM11 6.500q1.500 2.500 0 5M14 4.500q3 4.500 0 9" {...stroke} />
            <path d="M17 2.500q5 6.500 0 13" fill="none" stroke="#888" strokeWidth="1.200" />
          </svg>
          <span className="ml-[12px] w-[30px] text-[15px] tracking-[-0.7px]">ENG</span>
          <div className="ml-[9px] flex w-[80px] flex-col items-center pb-px text-[15px] leading-[23px] tracking-[-0.75px]">
            <span>12:25</span>
            <span>10.01.2023</span>
          </div>
          <svg className="ml-[18px] h-5 w-5" viewBox="0 0 20 20">
            <path d="M.6.600h18.800v15.500h-6.500L10 19l-2.900-2.900H.6z" {...stroke} />
          </svg>
          <div className="ml-auto h-full w-[6px] border-l border-[#6a6a6a]" />
        </div>
      </div>
    </footer>
  );
}

export default function App() {
  return (
    <div className="flex h-[1080px] w-[1920px] flex-col overflow-hidden bg-[#bf4948] font-['Open_Sans',sans-serif]">
      <div className="flex min-h-0 flex-1">
        <Sidebar />
        <div className="flex min-w-0 flex-1 flex-col">
          <TabStrip />
          <div className="h-[80px] shrink-0 rounded-t-[10px] bg-[#f56665]">
            <AddressRow />
            <BookmarksRow />
          </div>
          <BlogPage />
        </div>
      </div>
      <Taskbar />
    </div>
  );
}
